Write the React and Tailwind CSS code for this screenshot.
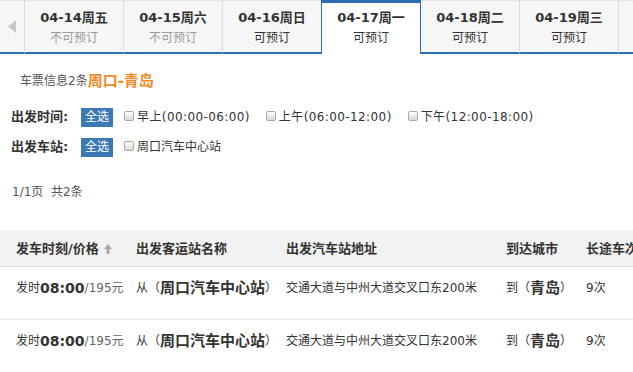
import React from "react";

const tabs = [
  { date: "04-14周五", status: "不可预订", ok: false },
  { date: "04-15周六", status: "不可预订", ok: false },
  { date: "04-16周日", status: "可预订", ok: true },
  { date: "04-17周一", status: "可预订", ok: true, active: true },
  { date: "04-18周二", status: "可预订", ok: true },
  { date: "04-19周三", status: "可预订", ok: true },
];

const rows = [
  { time: "08:00", price: "195", station: "周口汽车中心站", addr: "交通大道与中州大道交叉口东200米", city: "青岛", trips: "9次" },
  { time: "08:00", price: "195", station: "周口汽车中心站", addr: "交通大道与中州大道交叉口东200米", city: "青岛", trips: "9次" },
];

const Checkbox = () => (
  <span className="inline-block w-[10px] h-[10px] border border-[#a9a9a9] rounded-[2px] bg-linear-to-b from-white to-[#d8d8d8] mr-[3px] -mt-[3px]"></span>
);

const Tab = ({ tab, noLeft }) => {
  const base = "h-[54px] flex flex-col items-center shrink-0 whitespace-nowrap";
  if (tab.active) {
    return (
      <div className={`${base} w-[100px] bg-white border-t-[3px] border-x border-[#2d6db5] pt-[5px]`}>
        <span className="text-[13px] font-bold text-[#333] leading-[20px]">{tab.date}</span>
        <span className="text-[12px] text-[#333] leading-[20px]">{tab.status}</span>
      </div>
    );
  }
  return (
    <div
      className={`${base} ${noLeft ? "w-[98px]" : "w-[99px] border-l border-l-[#dedede]"} bg-[#f6f6f6] border-t border-t-[#e3e3e3] border-b-2 border-b-[#2d6db5] pt-[7px]`}
    >
      <span className="text-[13px] font-bold text-[#333] leading-[20px]">{tab.date}</span>
      <span className={`text-[12px] leading-[20px] ${tab.ok ? "text-[#333]" : "text-[#9a9a9a]"}`}>{tab.status}</span>
    </div>
  );
};

export default function App() {
  return (
    <div
      className="w-[633px] h-[372px] overflow-hidden bg-white text-[#333]"
      style={{ fontFamily: '"DejaVu Sans", "Noto Sans CJK SC", sans-serif' }}
    >
      {/* date tabs */}
      <div className="flex">
        <div className="w-[24px] h-[54px] shrink-0 bg-[#f6f6f6] border-t border-t-[#e3e3e3] border-b-2 border-b-[#2d6db5] flex items-center justify-center">
          <svg width="9" height="13" viewBox="0 0 9 13">
            <polygon points="8,0 8,13 0,6.5" fill="#c6c6c6" />
          </svg>
        </div>
        {tabs.map((t, i) => (
          <Tab key={t.date} tab={t} noLeft={i > 0 && tabs[i - 1].active} />
        ))}
        <div className="h-[54px] flex-1 bg-[#f6f6f6] border-l border-l-[#dedede] border-t border-t-[#e3e3e3] border-b-2 border-b-[#2d6db5]"></div>
      </div>

      {/* summary */}
      <div className="mt-[17px] h-[20px] flex items-center pl-[20px] whitespace-nowrap">
        <span className="text-[12px] text-[#555]">车票信息2条</span>
        <span className="text-[15px] font-bold text-[#f08a24]">周口-青岛</span>
      </div>

      {/* filters */}
      <div className="mt-[16px] h-[20px] flex items-center pl-[11px] whitespace-nowrap">
        <span className="w-[70px] text-[13px] font-bold">出发时间:</span>
        <span className="w-[32px] h-[19px] bg-[#3b79b4] text-white text-[12px] flex items-center justify-center">全选</span>
        <label className="ml-[11px] flex items-center text-[12px] tracking-[0.4px]">
          <Checkbox />早上(00:00-06:00)
        </label>
        <label className="ml-[16px] flex items-center text-[12px] tracking-[0.4px]">
          <Checkbox />上午(06:00-12:00)
        </label>
        <label className="ml-[16px] flex items-center text-[12px] tracking-[0.4px]">
          <Checkbox />下午(12:00-18:00)
        </label>
      </div>
      <div className="mt-[10px] h-[20px] flex items-center pl-[11px] whitespace-nowrap">
        <span className="w-[70px] text-[13px] font-bold">出发车站:</span>
        <span className="w-[32px] h-[19px] bg-[#3b79b4] text-white text-[12px] flex items-center justify-center">全选</span>
        <label className="ml-[11px] flex items-center text-[12px]">
          <Checkbox />周口汽车中心站
        </label>
      </div>

      {/* pager */}
      <div className="mt-[25px] h-[20px] flex items-center pl-[12px] text-[12px] text-[#555] whitespace-nowrap">
        1/1页&nbsp;&nbsp;共2条
      </div>

      {/* table */}
      <div className="mt-[29px] whitespace-nowrap">
        <div className="h-[36px] flex items-center bg-[#f2f2f2] border-b border-[#dcdcdc] text-[13px] font-bold">
          <div className="w-[136px] shrink-0 pl-[16px] flex items-center">
            发车时刻/价格
            <svg className="ml-[5px]" width="8" height="10" viewBox="0 0 8 10">
              <polygon points="4,0 8,5 5.5,5 5.5,10 2.5,10 2.5,5 0,5" fill="#a8a8a8" />
            </svg>
          </div>
          <div className="w-[150px] shrink-0">出发客运站名称</div>
          <div className="w-[220px] shrink-0">出发汽车站地址</div>
          <div className="w-[80px] shrink-0">到达城市</div>
          <div className="shrink-0">长途车次</div>
        </div>
        {rows.map((r, i) => (
          <div key={i} className="h-[53px] flex items-start pt-[11px] border-b border-[#e6e6e6] text-[12px]">
            <div className="w-[136px] shrink-0 pl-[16px] h-[20px] flex items-center">
              发时<span className="text-[14px] font-bold">{r.time}</span>
              <span className="text-[#666]">/{r.price}元</span>
            </div>
            <div className="w-[150px] shrink-0 h-[20px] flex items-center">
              从（<span className="text-[15px] font-bold">{r.station}</span>）
            </div>
            <div className="w-[220px] shrink-0 h-[20px] flex items-center">{r.addr}</div>
            <div className="w-[80px] shrink-0 h-[20px] flex items-center">
              到（<span className="text-[15px] font-bold">{r.city}</span>）
            </div>
            <div className="shrink-0 h-[20px] flex items-center">{r.trips}</div>
          </div>
        ))}
      </div>
    </div>
  );
}
